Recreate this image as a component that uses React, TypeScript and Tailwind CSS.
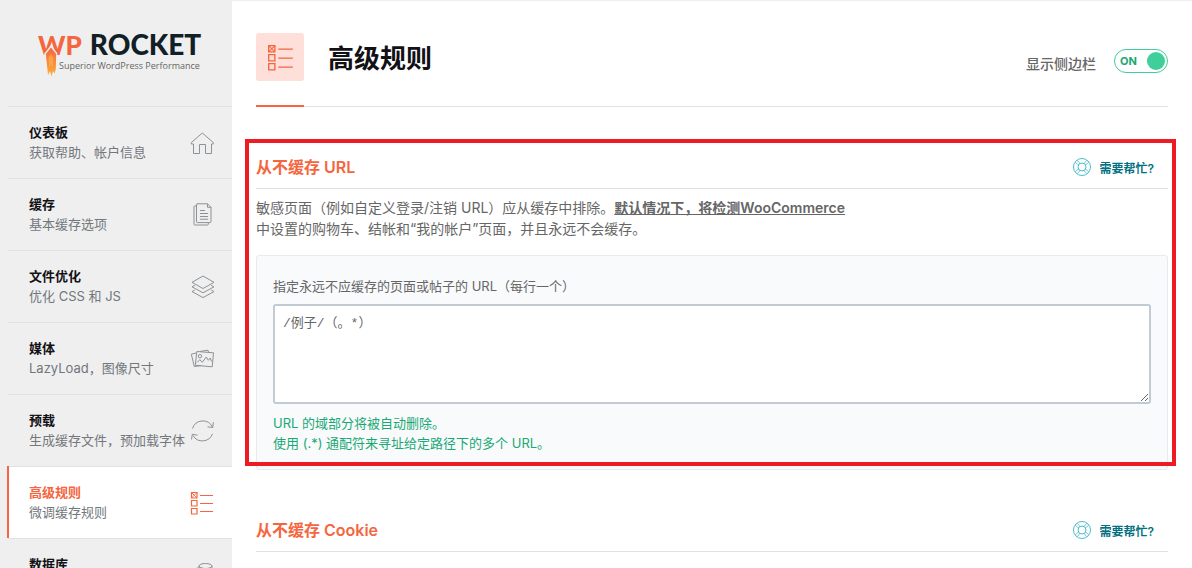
import type { ReactNode } from "react";

type IconProps = { className?: string };

function Icon({ className = "size-6", children }: IconProps & { children: ReactNode }) {
  return (
    <svg viewBox="0 0 24 24" fill="none" stroke="currentColor" aria-hidden="true" className={`shrink-0 ${className}`}>
      {children}
    </svg>
  );
}

const HomeIcon = () => (
  <Icon>
    <path d="M1.300 11.600 12.300 2 l11 9.600 v1.400 H21.500 v9.500 H15.500 V13.500 H9.500 V22.500 H3.500 V13 H1.300Z" />
  </Icon>
);

const PagesIcon = () => (
  <Icon>
    <path d="M7 .8h10.500l3.500 3.500v14.500a.8.8 0 0 1-.8.8H7.300a.8.8 0 0 1-.8-.8V1.600a.8.8 0 0 1 .8-.8ZM17.500.8v3.500H21M6.500 3H4.800a.8.8 0 0 0-.8.8v17.400a.8.8 0 0 0 .8.8h12.700a.8.8 0 0 0 .8-.8v-1.600M10 7.500h5M10 10.500h8M10 13.500h8M10 16.200h8" />
  </Icon>
);

const LayersIcon = () => (
  <Icon>
    <path d="m13 1 11 6.300L13 13.500 2 7.300ZM4.800 10.300 2 11.800l11 6 11-6-2.800-1.500M4.800 15 2 16.600l11 6 11-6L21.200 15" />
  </Icon>
);

const MediaIcon = () => (
  <Icon>
    <path d="m6.800 4.500 16.700 1.300-1.300 14L5.300 18.300ZM6.200 6 1.300 7.200l3 12.300 6.700-.9M9.500 4.500l8.500-1.300.5 2" />
    <circle cx="10" cy="9.200" r="1.700" />
    <path d="m7 15.500 2.800-2.800 2.500 2.600 4-5.300 2 3.300 2-2.300 1.200 3.500" />
  </Icon>
);

const RefreshIcon = () => (
  <Icon>
    <path d="M2.500 9.500A10.800 10.800 0 0 1 22.500 8M23.300 3.200 22.800 8.500 17.500 7.800M22.500 14.800A10.800 10.800 0 0 1 3 16.500M1.500 20.500l.8-5.200 5.200.8" />
  </Icon>
);

const RulesIcon = ({ className }: IconProps) => (
  <Icon className={className}>
    <path
      strokeWidth="1.200"
      d="M1.500 1.500h5.500v5.500H1.500ZM1.500 9.500h5.500v5.500H1.500ZM1.500 17.500h5.500v5.500H1.500ZM10 4.500H23M10 12.500H23M10 20.500H23"
    />
    <path strokeWidth=".9" d="m1.500 1.500 5.500 5.500M7 1.500 1.500 7" />
  </Icon>
);

const DatabaseIcon = () => (
  <Icon>
    <ellipse cx="15.500" cy="3" rx="6.500" ry="2.500" />
    <path d="M9 3v2M22 3v13c0 1.700-2.500 2.700-6 2.700" />
    <ellipse cx="9.500" cy="7.500" rx="6.500" ry="2.500" />
    <path d="M3 7.500v12c0 1.700 2.900 3 6.500 3s6.500-1.300 6.500-3v-12" />
  </Icon>
);

const HelpIcon = () => (
  <svg viewBox="0 0 18 18" fill="none" stroke="#4dbdcb" aria-hidden="true" className="size-[18px]">
    <circle cx="9" cy="9" r="8.500" />
    <circle cx="9" cy="9" r="4" />
    <path d="M2.200 4.200 5.500 7M4.200 2.200 7 5.500M13.800 2.200 11 5.500M15.800 4.200 12.500 7M2.200 13.800 5.500 11M4.200 15.800 7 12.500M13.800 15.800 11 12.500M15.800 13.800 12.500 11" strokeWidth=".8" />
  </svg>
);

const Flame = () => (
  <svg viewBox="0 0 14 34" aria-hidden="true" className="absolute left-[6px] top-[16px] h-[34px] w-[14px]">
    <defs>
      <linearGradient id="flame" x1="0" y1="0" x2="0" y2="1">
        <stop offset="0" stopColor="#f56640" />
        <stop offset=".5" stopColor="#f98a3c" />
        <stop offset="1" stopColor="#fbb03b" />
      </linearGradient>
    </defs>
    <path d="M7 0 13.500 8.500 12.500 12 12 28 9.500 25 7.500 31 5 27 3 31 2 12 0 9Z" fill="#efefef" />
    <path d="M7 2.500 12.200 9 11.800 24 10.600 28.500 9 26 7.500 31.500 6 26 4 30 1.800 9Z" fill="url(#flame)" />
    <path d="M7 9 9.500 13 8.500 23 7 20 5.200 23 4.500 13Z" fill="#fbb44c" opacity=".65" />
  </svg>
);

const items = [
  { title: "仪表板", text: "获取帮助、帐户信息", icon: <HomeIcon /> },
  { title: "缓存", text: "基本缓存选项", icon: <PagesIcon /> },
  { title: "文件优化", text: "优化 CSS 和 JS", icon: <LayersIcon /> },
  { title: "媒体", text: "LazyLoad，图像尺寸", icon: <MediaIcon /> },
  { title: "预载", text: "生成缓存文件，预加载字体", icon: <RefreshIcon /> },
  { title: "高级规则", text: "微调缓存规则", icon: <RulesIcon />, active: true },
  { title: "数据库", text: "", icon: <DatabaseIcon /> },
];

function Sidebar() {
  return (
    <aside className="w-[232px] shrink-0 bg-[#efefef] pl-2">
      <div className="h-[106px] pl-[30px] pt-[29px]">
        <div className="relative font-['Lato',sans-serif]">
          <div className="flex items-baseline gap-2 whitespace-nowrap font-black leading-[30px]">
            <span className="text-[26px] text-[#f56640]">WP</span>
            <span className="text-[28px] text-[#121f27]">ROCKET</span>
          </div>
          <p className="whitespace-nowrap pl-[21px] font-['Open_Sans',sans-serif] text-[9px] leading-3 text-[#666]">
            Superior WordPress Performance
          </p>
          <Flame />
        </div>
      </div>
      <nav>
        {items.map((item) => (
          <a
            key={item.title}
            href="#"
            className={
              item.active
                ? "-ml-px flex h-[72px] border-l-2 border-[#f56640] bg-white text-[#f56640]"
                : "flex h-[72px] text-[#8d9296]"
            }
          >
            <span className={`flex flex-1 items-start justify-between border-t border-[#dfe2e7] pr-[18px] ${item.active ? "pl-5" : "pl-[21px]"}`}>
              <span className="whitespace-nowrap pt-[15px] text-[13px] leading-5">
                <span className={`block font-bold ${item.active ? "text-[#f56640]" : "text-[#121116]"}`}>{item.title}</span>
                {item.text && <span className="block text-[#72777c]">{item.text}</span>}
              </span>
              <span className="pt-6">{item.icon}</span>
            </span>
          </a>
        ))}
      </nav>
    </aside>
  );
}

function SectionHeader({ title }: { title: string }) {
  return (
    <div className="flex h-[43px] items-center justify-between border-b border-[#e0e1e5] pr-[14px]">
      <h2 className="text-[16px] font-semibold leading-6 text-[#f56640]">{title}</h2>
      <button type="button" className="flex items-center gap-2 text-[12px] font-semibold text-[#02707f]">
        <HelpIcon />
        <span className="pt-[3px] leading-5">需要帮忙?</span>
      </button>
    </div>
  );
}

export default function App() {
  return (
    <div className="flex h-screen overflow-hidden bg-white font-['Inter','Noto_Sans_CJK_SC',sans-serif] text-[#666]">
      <Sidebar />
      <main className="min-w-0 flex-1 border-t border-[#eeeeee] px-6">
        <header className="flex h-[106px] items-start justify-between border-b border-[#e0e1e8]">
          <div className="flex h-[106px] items-start gap-6">
            <div className="h-[106px] w-12 border-b-2 border-[#f56640] pt-8">
              <div className="flex size-12 items-center justify-center rounded-[3px] bg-[#ffdfd9] text-[#f56640]">
                <RulesIcon className="size-[27px]" />
              </div>
            </div>
            <h1 className="pt-[38px] text-[26px] font-bold leading-10 text-[#121116]">高级规则</h1>
          </div>
          <label className="flex cursor-pointer items-start gap-[18px] pt-12 text-[14px] font-medium leading-6">
            <span className="pt-[3px]">显示侧边栏</span>
            <input type="checkbox" role="switch" defaultChecked className="sr-only" />
            <span className="flex h-6 w-[54px] items-center justify-between rounded-full border border-[#3ecf9b] bg-white pl-[5px] pr-[2px] text-[11px] font-bold text-[#19a974]">
              ON
              <span className="size-[18px] rounded-full bg-[#3ecf9b]" />
            </span>
          </label>
        </header>

        <section className="relative pt-[39px]">
          <SectionHeader title="从不缓存 URL" />
          <p className="pt-2 text-[14px] leading-[21px]">
            敏感页面（例如自定义登录/注销 URL）应从缓存中排除。
            <a href="#" className="font-semibold underline">默认情况下，将检测WooCommerce</a>
            <br />
            中设置的购物车、结帐和“我的帐户”页面，并且永远不会缓存。
          </p>
          <div className="mt-4 rounded-[3px] border border-[#e8ebee] bg-[#f9fafc] px-4 pb-4 pt-5 text-[13px] leading-5">
            <label htmlFor="urls" className="block">指定永远不应缓存的页面或帖子的 URL（每行一个）</label>
            <textarea
              id="urls"
              defaultValue="/例子/（。*）"
              className="mt-2 block h-[100px] w-full rounded-[3px] border-2 border-[#c2cad4] bg-white p-2 font-['Liberation_Mono','Noto_Sans_CJK_SC',monospace] text-[13px] leading-5 text-[#666] outline-none"
            />
            <p className="pt-[9px] text-[#19a974]">
              URL 的域部分将被自动删除。
              <br />
              使用 (.*) 通配符来寻址给定路径下的多个 URL。
            </p>
          </div>
          <div className="pointer-events-none absolute -left-[11px] -right-2 bottom-1 top-8 border-4 border-[#ed1c24]" />
        </section>

        <section className="pt-[39px]">
          <SectionHeader title="从不缓存 Cookie" />
        </section>
      </main>
    </div>
  );
}
